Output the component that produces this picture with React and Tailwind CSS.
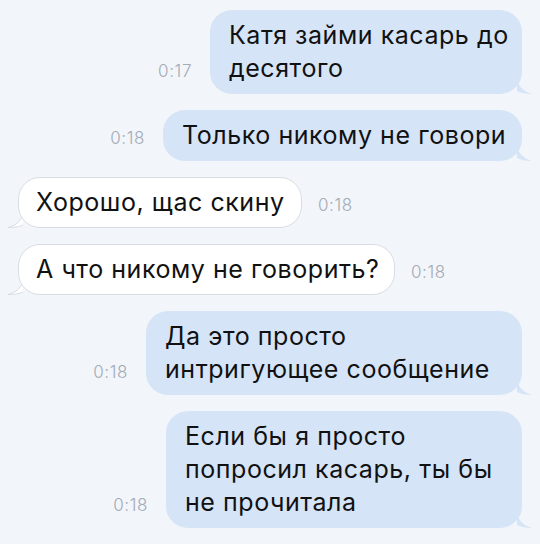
import React from 'react';

const messages = [
    { out: true, time: '0:17', w: 'w-[312px]', lines: ['Катя займи касарь до', 'десятого'] },
    { out: true, time: '0:18', w: 'w-[359px]', lines: ['Только никому не говори'] },
    { out: false, time: '0:18', w: 'w-[284px]', lines: ['Хорошо, щас скину'] },
    { out: false, time: '0:18', w: 'w-[377px]', lines: ['А что никому не говорить?'] },
    { out: true, time: '0:18', w: 'w-[376px]', lines: ['Да это просто', 'интригующее сообщение'] },
    { out: true, time: '0:18', w: 'w-[356px]', lines: ['Если бы я просто', 'попросил касарь, ты бы', 'не прочитала'] },
];

const Time = ({ children }) => (
    <span className="pb-[13px] text-[17px] leading-5 font-light text-[#a3abb6] tracking-[0.6px]">{children}</span>
);

const Bubble = ({ out, lines, w }) => (
    <div className={`relative ${w}`}>
        {out ? (
            <svg className="absolute -right-[11px] bottom-0" width="16" height="18" viewBox="0 0 16 18">
                <path d="M0 0 C0 9 5 15 15 18 C9 18 4 17 0 15 Z" fill="#d5e4f7" />
            </svg>
        ) : (
            <svg className="absolute -left-[11px] bottom-0" width="16" height="18" viewBox="0 0 16 18">
                <path d="M16 0 C16 9 11 15 1 17.5 C7 17.5 12 17 16 15" fill="#fff" stroke="#d9dde3" strokeWidth="1" />
            </svg>
        )}
        <div
            className={
                out
                    ? 'relative rounded-[22px] bg-[#d5e4f7] px-[19px] py-[9px]'
                    : 'relative rounded-[22px] border border-[#d9dde3] bg-white px-[17px] py-[8px]'
            }
        >
            {lines.map((l, i) => (
                <div key={i} className="whitespace-nowrap text-[25px] leading-[33px] tracking-[0.55px] text-[#111]">
                    {l}
                </div>
            ))}
        </div>
    </div>
);

export default function App() {
    return (
        <div className="min-h-[544px] w-[540px] bg-[#f2f5fa] pt-[10px] pb-4 font-['Inter','Liberation_Sans',sans-serif]">
            <div className="flex flex-col gap-4">
                {messages.map((m, i) => (
                    <div
                        key={i}
                        className={
                            m.out
                                ? 'flex items-end justify-end gap-[18px] pr-[18px]'
                                : 'flex items-end justify-start gap-[16px] pl-[18px]'
                        }
                    >
                        {m.out && <Time>{m.time}</Time>}
                        <Bubble out={m.out} lines={m.lines} w={m.w} />
                        {!m.out && <Time>{m.time}</Time>}
                    </div>
                ))}
            </div>
        </div>
    );
}
